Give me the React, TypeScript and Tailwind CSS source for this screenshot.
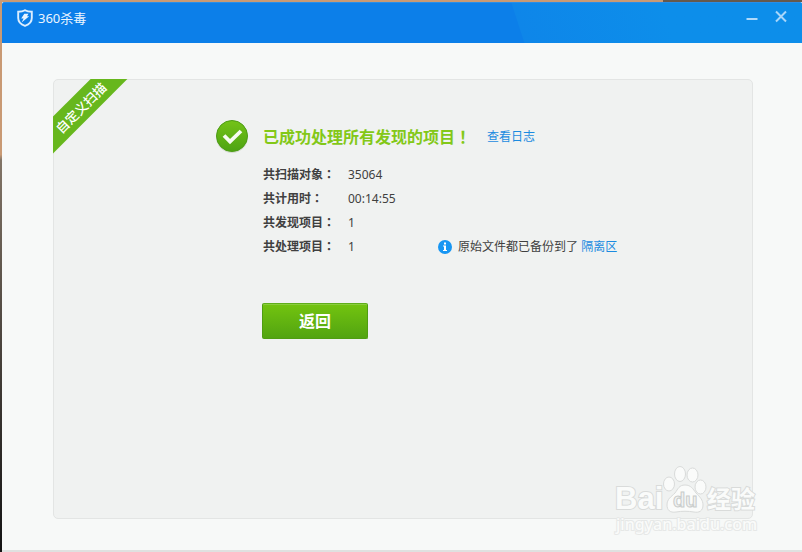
import React from "react";

interface Stat {
  label: string;
  value: string;
}

const stats: Stat[] = [
  { label: "共扫描对象", value: "35064" },
  { label: "共计用时", value: "00:14:55" },
  { label: "共发现项目", value: "1" },
  { label: "共处理项目", value: "1" },
];

function ShieldLogo() {
  return (
    <svg viewBox="0 0 16 18" className="w-4 h-[18px]" aria-hidden="true">
      <path
        d="M8 1.2C6.2 2.3 3.8 2.8 1.2 2.8V9c0 4 2.6 6.4 6.8 7.9C12.2 15.4 14.8 13 14.8 9V2.8C12.2 2.8 9.8 2.3 8 1.2Z"
        fill="none"
        stroke="#dceefe"
        strokeWidth="1.9"
      />
      <path d="M7.3 4.8h4.2L10 7.3h2.2L4.6 13.6l2-4H4.2Z" fill="#e8f4ff" />
    </svg>
  );
}

function TitleBar() {
  return (
    <header className="relative h-[41px] rounded-t-xs overflow-hidden border-t border-[#278ee9] bg-[#0c7fe9]">
      {/* Slanted highlight on the right */}
      <div className="absolute inset-y-0 -right-4 w-[300px] -skew-x-[-18deg] bg-linear-to-r from-[#0e86e9] to-[#0d8eea] to-50%"></div>
      <div className="relative flex items-start justify-between pl-[15px] pr-[15px]">
        <div className="flex items-center gap-[5px] pt-[6px]">
          <ShieldLogo />
          <h1 className="text-[13px] leading-[18px] text-[#eaf5ff]">360杀毒</h1>
        </div>
        <div className="flex items-center gap-[17px] pt-[7px]">
          <button type="button" aria-label="最小化" className="flex w-3 h-4 items-center justify-center">
            <svg viewBox="0 0 12 16" className="w-3 h-4">
              <path d="M.5 9h11" stroke="#b0dafa" strokeWidth="2" />
            </svg>
          </button>
          <button type="button" aria-label="关闭" className="flex w-3 h-4 items-center justify-center">
            <svg viewBox="0 0 12 16" className="w-3 h-4">
              <path d="M1 1.5l10 10M11 1.5L1 11.5" stroke="#a8d6fa" strokeWidth="2" />
            </svg>
          </button>
        </div>
      </div>
    </header>
  );
}

function Ribbon() {
  return (
    <div className="absolute -left-px -top-px w-20 h-20">
      <div className="absolute inset-0 overflow-hidden">
        <div className="absolute -left-8 top-[15px] w-[120px] h-[26px] -rotate-45 bg-[#67b71d]"></div>
      </div>
      <span className="absolute -left-2 top-[19px] w-[72px] -rotate-45 text-center text-[13px] font-medium leading-5 whitespace-nowrap text-white">
        自定义扫描
      </span>
    </div>
  );
}

function SuccessIcon() {
  return (
    <svg viewBox="0 0 34 34" className="w-[34px] h-[34px] shrink-0" aria-hidden="true">
      <defs>
        <linearGradient id="success" x1="0" y1="0" x2="0" y2="1">
          <stop offset="0" stopColor="#74c318" />
          <stop offset="1" stopColor="#4da312" />
        </linearGradient>
      </defs>
      <circle cx="17" cy="17" r="16" fill="#d3dbcf" />
      <circle cx="17" cy="16" r="15.5" fill="url(#success)" stroke="#4d9d15" strokeWidth="1" />
      <path d="M9 15.5l6 6 11-10.5" fill="none" stroke="#f6fbf1" strokeWidth="3.8" />
    </svg>
  );
}

function InfoIcon() {
  return (
    <svg viewBox="0 0 14 14" className="w-[14px] h-[14px]" aria-hidden="true">
      <circle cx="7" cy="7" r="7" fill="#1796f3" />
      <path d="M6 2.5h2v2H6zM5 5.5h3v4.5h1v1H5v-1h1V6.5H5z" fill="#fff" />
    </svg>
  );
}

function Watermark() {
  return (
    <div className="pointer-events-none absolute right-[42px] bottom-[9px] select-none">
      <svg viewBox="0 0 148 76" className="w-[148px] h-[76px]" fill="#fafbfa" stroke="#d9dbda" strokeWidth="1">
        <text x="3" y="44" fontSize="31" fontWeight="700" strokeWidth="2" paintOrder="stroke" className="font-['Liberation_Sans']">
          Bai
        </text>
        <ellipse cx="57" cy="19" rx="5.5" ry="7" />
        <ellipse cx="68" cy="9" rx="5.5" ry="7.5" />
        <ellipse cx="80.5" cy="10" rx="5.5" ry="7" />
        <ellipse cx="88.5" cy="22" rx="5.5" ry="7" />
        <path d="M73 20c6 0 8 4 11 8 4 4 7 7 7 12 0 6-4 8-9 7-6-1-12-1-18 0-6 1-9-2-9-7 0-6 4-8 8-12 3-4 4-8 10-8Z" />
        <text x="61" y="42" fontSize="20" fontWeight="700" fill="#f1f3f2" stroke="#c9cccb" className="font-['Liberation_Sans']">
          du
        </text>
        <text x="95" y="43" fontSize="24" fontWeight="700" strokeWidth="2" paintOrder="stroke">
          经验
        </text>
        <text x="4" y="65" fontSize="16" fontWeight="500" stroke="#e6e8e7" strokeWidth="2" paintOrder="stroke">
          jingyan.baidu.com
        </text>
      </svg>
    </div>
  );
}

export default function App() {
  return (
    <div className="min-h-screen flex flex-col pl-[2px] pt-[2px] bg-linear-to-b from-[#c99a74] from-28% via-[#827567] via-29% to-[#141414] font-['Noto_Sans','Noto_Sans_CJK_SC',sans-serif]">
      <div className="relative flex-1 flex flex-col bg-[#f7f9f8] border-b-2 border-[#dfe1e0]">
        <div className="absolute -top-[2px] right-0 w-[139px] h-[2px] bg-[#65594c]"></div>
        <TitleBar />

        <main className="flex-1 flex flex-col pt-9 pl-[51px] pr-[49px] pb-[31px]">
          <section className="relative flex-1 rounded-[5px] border border-[#e3e5e4] bg-[#f0f2f1] pl-[161px] pr-6 pt-10 text-[12px] leading-6 text-[#404040]">
            <Ribbon />

            <div className="flex items-center gap-[14px]">
              <SuccessIcon />
              <div className="flex items-end gap-4">
                <h2 className="text-[16px] leading-6 font-bold text-[#83c818]">
                  已成功处理所有发现的项目
                  <span className="leading-none font-['Noto_Sans_CJK_TC',sans-serif]">！</span>
                </h2>
                <a href="#log" className="text-[#1b8be0] hover:underline">查看日志</a>
              </div>
            </div>

            <div className="pl-12 pt-[9px]">
              <div className="flex items-end">
                <dl className="w-[175px]">
                  {stats.map((stat) => (
                    <div key={stat.label} className="flex">
                      <dt className="w-[85px] font-bold">
                        {stat.label}
                        <span className="leading-none font-['Noto_Sans_CJK_TC',sans-serif]">：</span>
                      </dt>
                      <dd>{stat.value}</dd>
                    </div>
                  ))}
                </dl>
                <p className="flex items-center gap-[6px]">
                  <InfoIcon />
                  <span>
                    原始文件都已备份到了{" "}
                    <a href="#quarantine" className="text-[#1b8be0] hover:underline">隔离区</a>
                  </span>
                </p>
              </div>

              <button
                type="button"
                className="mt-11 -ml-px block w-[106px] h-9 rounded-xs border border-[#4f9d12] border-t-[#5fae1a] bg-linear-to-b from-[#73c40f] to-[#52a411] shadow-[inset_0_1px_0_#8acd3c] text-[16px] font-bold leading-8 text-white"
              >
                返回
              </button>
            </div>
          </section>
        </main>

        <Watermark />
      </div>
    </div>
  );
}
